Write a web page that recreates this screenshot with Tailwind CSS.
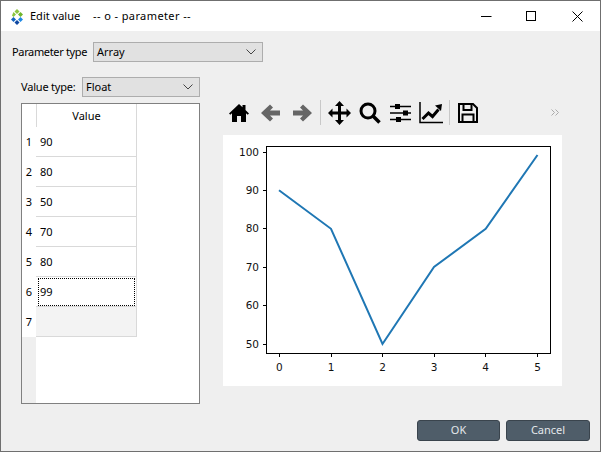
<!DOCTYPE html>
<html lang="en">
<head>
  <meta charset="UTF-8">
  <title>Edit value</title>
  <script src="https://cdn.jsdelivr.net/npm/@tailwindcss/browser@4"></script>
</head>
<body class="bg-[#efefef]">
  <div class="w-[601px] h-[452px] flex flex-col border border-[#6f6f6f] bg-[#efefef] text-[11px] text-black overflow-hidden whitespace-nowrap font-['Noto_Sans',sans-serif]">

    <!-- title bar -->
    <div class="h-[30px] shrink-0 bg-white flex items-center">
      <svg class="ml-[10px] w-[12px] h-[16px] mt-[1px]" viewBox="0 0 12 16">
        <path d="M6 0l2.500 2.500L6 5 3.500 2.500z" fill="#8cc63f"/>
        <path d="M9.500 3L12 5.500 9.500 8 7 5.500z" fill="#6fb52c"/>
        <path d="M2.500 3L5 5.500 2.500 8 1 6.500z" fill="#8cc63f"/>
        <path d="M2.500 8L5 10.500 2.500 13 0 10.500z" fill="#1565c0"/>
        <path d="M9.500 8L12 10.500 9.500 13 7 10.500z" fill="#1e88e5"/>
        <path d="M6 11l2.500 2.500L6 16l-2.500-2.500z" fill="#0d47a1"/>
      </svg>
      <span class="ml-[7px] w-[63px] mt-[1px]">Edit value</span>
      <span class="mt-[1px] tracking-[0.4px]">-- o - parameter --</span>
      <div class="ml-auto flex items-center">
        <svg class="w-[11px] h-[11px]" viewBox="0 0 11 11"><path d="M0 5.500h10.500" stroke="#000" fill="none"/></svg>
        <svg class="ml-[34px] w-[11px] h-[11px]" viewBox="0 0 11 11"><rect x="0.500" y="0.500" width="9" height="9" stroke="#000" fill="none"/></svg>
        <svg class="ml-[35px] mr-[17px] w-[11px] h-[11px]" viewBox="0 0 11 11"><path d="M0.500 0.500l10 10M10.500 0.500l-10 10" stroke="#000" fill="none"/></svg>
      </div>
    </div>

    <!-- parameter type -->
    <div class="mt-[11px] ml-[11px] h-[20px] flex items-center">
      <span class="w-[81px] mt-[1px] tracking-[-0.35px]">Parameter type</span>
      <div class="w-[170px] h-[20px] flex items-center justify-between pl-[3px] pr-[6px] bg-[#e1e1e1] border border-[#adadad]">
        <span class="mt-[1px]">Array</span>
        <svg class="w-[10px] h-[6px]" viewBox="0 0 10 6"><path d="M0.500 0.500L5 5l4.500-4.500" stroke="#444" fill="none"/></svg>
      </div>
    </div>

    <div class="mt-[15px] ml-[20px] flex">
      <!-- value table -->
      <div class="w-[179px] shrink-0">
        <div class="h-[20px] flex items-center">
          <span class="w-[61px] mt-[1px] tracking-[-0.2px]">Value type:</span>
          <div class="w-[118px] h-[20px] flex items-center justify-between pl-[3px] pr-[6px] bg-[#e1e1e1] border border-[#adadad]">
            <span class="mt-[1px]">Float</span>
            <svg class="w-[10px] h-[6px]" viewBox="0 0 10 6"><path d="M0.500 0.500L5 5l4.500-4.500" stroke="#444" fill="none"/></svg>
          </div>
        </div>
        <div class="mt-[6px] w-[179px] h-[301px] bg-white border border-[#808080] flex">
          <div class="w-[14px] flex flex-col">
            <div class="h-[23px] bg-white"></div>
            <div class="h-[30px] flex items-center justify-center bg-white pt-[1px]">1</div>
            <div class="h-[30px] flex items-center justify-center bg-white pt-[1px]">2</div>
            <div class="h-[30px] flex items-center justify-center bg-white pt-[1px]">3</div>
            <div class="h-[30px] flex items-center justify-center bg-white pt-[1px]">4</div>
            <div class="h-[30px] flex items-center justify-center bg-white pt-[1px]">5</div>
            <div class="h-[30px] flex items-center justify-center bg-white pt-[1px]">6</div>
            <div class="h-[30px] flex items-center justify-center bg-white pt-[1px]">7</div>
            <div class="flex-1 bg-[#efefef]"></div>
          </div>
          <div class="w-[101px] flex flex-col">
            <div class="h-[23px] flex items-center justify-center pt-[1px] border-l border-r border-[#d9d9d9]">Value</div>
            <div class="h-[30px] flex items-center pl-[4px] pt-[1px] border-r border-b border-[#d9d9d9]">90</div>
            <div class="h-[30px] flex items-center pl-[4px] pt-[1px] border-r border-b border-[#d9d9d9]">80</div>
            <div class="h-[30px] flex items-center pl-[4px] pt-[1px] border-r border-b border-[#d9d9d9]">50</div>
            <div class="h-[30px] flex items-center pl-[4px] pt-[1px] border-r border-b border-[#d9d9d9]">70</div>
            <div class="h-[30px] flex items-center pl-[4px] pt-[1px] border-r border-b border-[#d9d9d9]">80</div>
            <div class="h-[30px] flex items-center pl-[2px] border-r border-b border-[#d9d9d9] pr-[1px]">
              <div class="w-full h-[28px] flex items-center pl-[1px] pt-[1px] border border-dotted border-black">99</div>
            </div>
            <div class="h-[30px] bg-[#f3f3f3] border-r border-b border-[#d9d9d9]"></div>
          </div>
        </div>
      </div>

      <!-- plot -->
      <div class="ml-[23px] w-[339px] shrink-0">
        <div class="h-[25px] mt-[23px] flex items-center relative">
          <svg class="ml-[6px] w-[20px] h-[20px]" viewBox="0 0 20 20"><path d="M10 1L0 10.500l1.300 1.300L3 10.200V19h5v-6h4v6h5v-8.800l1.700 1.600 1.300-1.300L16.500 7V2h-3v2.200z" fill="#000"/></svg>
          <svg class="ml-[12px] w-[20px] h-[20px]" viewBox="0 0 20 20"><path d="M9 2l3 3-3 3h10v5H9l3 3-3 3-9-8.500z" transform="translate(0 -0.500)" fill="#666"/></svg>
          <svg class="ml-[11px] w-[20px] h-[20px]" viewBox="0 0 20 20"><path d="M11 2L8 5l3 3H1v5h10l-3 3 3 3 9-8.500z" transform="translate(0 -0.500)" fill="#666"/></svg>
          <div class="ml-[8px] w-px h-[25px] bg-[#c8c8c8]"></div>
          <svg class="ml-[7px] w-[23px] h-[24px]" viewBox="0 0 23 24"><path d="M11.500 0L16 5h-3v5.500h5.500v-3l4.500 4.500-4.500 4.500v-3H13V19h3l-4.500 5L7 19h3v-5.500H4.500v3L0 12l4.500-4.500v3H10V5H7z" fill="#000"/></svg>
          <svg class="ml-[8px] w-[22px] h-[22px]" viewBox="0 0 22 22"><circle cx="9" cy="9" r="7" stroke="#000" stroke-width="3" fill="none"/><path d="M14 14l6.500 6.500" stroke="#000" stroke-width="3.500" fill="none"/></svg>
          <svg class="ml-[9px] w-[21px] h-[20px]" viewBox="0 0 21 20"><path d="M0 3.500h21M0 10h21M0 16.500h21" stroke="#000" stroke-width="1.500" fill="none"/><rect x="5" y="1" width="5" height="5" fill="#000"/><rect x="13" y="7.500" width="5" height="5" fill="#000"/><rect x="6" y="14" width="5" height="5" fill="#000"/></svg>
          <svg class="ml-[8px] w-[24px] h-[22px]" viewBox="0 0 24 22"><path d="M1 0v20.500h23" stroke="#000" stroke-width="1.500" fill="none"/><path d="M3.500 17l6-6 4 3.500 6-7" stroke="#000" stroke-width="3" fill="none"/><path d="M16 3.500l7-1.500-1 7z" fill="#000"/></svg>
          <div class="ml-[6px] w-px h-[25px] bg-[#c8c8c8]"></div>
          <svg class="ml-[8px] w-[20px] h-[20px]" viewBox="0 0 20 20"><path d="M1 1h14l4 4v14H1z" stroke="#000" stroke-width="2" fill="none"/><path d="M5.500 1v6h8V1" stroke="#000" stroke-width="2" fill="none"/><path d="M4.500 18.500v-7h11v7" stroke="#000" stroke-width="2" fill="none"/></svg>
          <svg class="ml-auto mr-[3px] w-[8px] h-[7px]" viewBox="0 0 8 7"><path d="M0.500 0.500L3.500 3.500 0.500 6.500M4.500 0.500L7.500 3.500 4.500 6.500" stroke="#aaa" fill="none"/></svg>
        </div>

        <svg class="block mt-[10px] bg-white" width="339" height="251" viewBox="223 135 339 251">
          <rect x="266.500" y="146.500" width="284" height="207" fill="none" stroke="#000" stroke-width="1"/>
          <polyline points="279,190.300 331,228.800 382.500,344 434,267 485.700,228.800 537.500,155" fill="none" stroke="#1f77b4" stroke-width="2"/>
          <path d="M263 152.500h3.500M263 190.500h3.500M263 228.500h3.500M263 267.500h3.500M263 305.500h3.500M263 344.500h3.500M279.500 353.500v3.500M331.500 353.500v3.500M382.500 353.500v3.500M434.500 353.500v3.500M485.500 353.500v3.500M537.500 353.500v3.500" stroke="#000" fill="none"/>
          <g font-family="DejaVu Sans" font-size="10.500" fill="#111" text-anchor="end">
            <text x="259" y="156">100</text>
            <text x="259" y="194">90</text>
            <text x="259" y="232">80</text>
            <text x="259" y="271">70</text>
            <text x="259" y="309">60</text>
            <text x="259" y="348">50</text>
          </g>
          <g font-family="DejaVu Sans" font-size="10.500" fill="#111" text-anchor="middle">
            <text x="279.300" y="371">0</text>
            <text x="331" y="371">1</text>
            <text x="382.500" y="371">2</text>
            <text x="434" y="371">3</text>
            <text x="485.700" y="371">4</text>
            <text x="537.500" y="371">5</text>
          </g>
        </svg>
      </div>
    </div>

    <!-- dialog buttons -->
    <div class="mt-auto mb-[10px] mr-[10px] flex justify-end gap-[6px]">
      <button class="w-[83px] h-[21px] rounded-[3px] bg-[#4f5d69] border border-[#3a444d] text-[#e4e8eb] flex items-center justify-center">OK</button>
      <button class="w-[84px] h-[21px] rounded-[3px] bg-[#4f5d69] border border-[#3a444d] text-[#e4e8eb] flex items-center justify-center">Cancel</button>
    </div>
  </div>
</body>
</html>
